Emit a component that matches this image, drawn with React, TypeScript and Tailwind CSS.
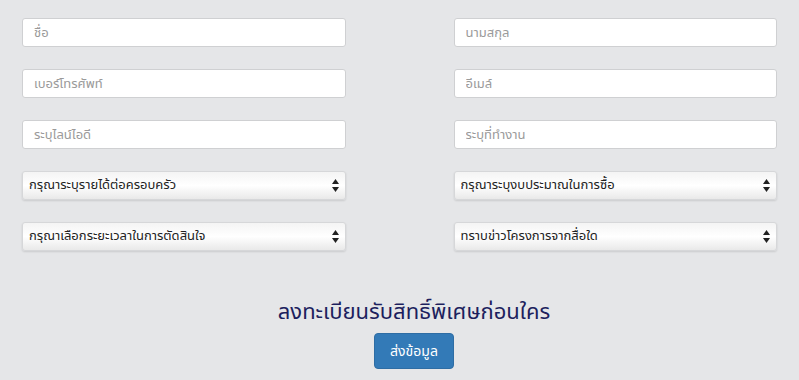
import React from 'react';

const font = { fontFamily: '"Noto Sans Thai", "Noto Sans", "Liberation Sans", sans-serif' };

const TextField = ({ placeholder }: { placeholder: string }) => (
  <input
    type="text"
    placeholder={placeholder}
    className="block h-[29px] w-full rounded-[3px] border border-[#cfd0d2] bg-white px-[11px] text-[13px] text-[#333] placeholder:text-[#9a9a9a] outline-none"
    style={font}
  />
);

const SelectField = ({ label }: { label: string }) => (
  <div className="relative h-[29px] w-full">
    <select
      className="block h-full w-full appearance-none rounded-[3px] border border-[#d6d7d9] bg-gradient-to-b from-[#f4f4f4] via-white to-[#e9e9e9] pl-[6px] pr-6 text-[13px] text-[#222] shadow-[0_1px_2px_rgba(0,0,0,0.12)] outline-none"
      style={font}
      defaultValue=""
    >
      <option value="">{label}</option>
    </select>
    <svg
      className="pointer-events-none absolute right-[7px] top-[8px]"
      width="7"
      height="13"
      viewBox="0 0 7 13"
    >
      <path d="M3.5 0 L7 5 H0 Z" fill="#222" />
      <path d="M0 8 H7 L3.5 13 Z" fill="#222" />
    </svg>
  </div>
);

export default function App() {
  return (
    <div className="min-h-[380px] w-full bg-[#e5e6e8] pt-[18px]" style={font}>
      <div className="grid grid-cols-2 gap-x-[108px] px-[22px]">
        <div className="flex flex-col gap-[22px]">
          <TextField placeholder="ชื่อ" />
          <TextField placeholder="เบอร์โทรศัพท์" />
          <TextField placeholder="ระบุไลน์ไอดี" />
          <SelectField label="กรุณาระบุรายได้ต่อครอบครัว" />
          <SelectField label="กรุณาเลือกระยะเวลาในการตัดสินใจ" />
        </div>
        <div className="flex flex-col gap-[22px]">
          <TextField placeholder="นามสกุล" />
          <TextField placeholder="อีเมล์" />
          <TextField placeholder="ระบุที่ทำงาน" />
          <SelectField label="กรุณาระบุงบประมาณในการซื้อ" />
          <SelectField label="ทราบข่าวโครงการจากสื่อใด" />
        </div>
      </div>
      <div className="mt-[49px] flex flex-col items-center pl-[29px]">
        <h2 className="text-[22px] leading-[26px] text-[#1d1f5e]">ลงทะเบียนรับสิทธิ์พิเศษก่อนใคร</h2>
        <button
          type="button"
          className="mt-[7px] h-[36px] w-[80px] rounded-[4px] border border-[#2e6da4] bg-[#337ab7] text-[14px] text-white"
        >
          ส่งข้อมูล
        </button>
      </div>
    </div>
  );
}
